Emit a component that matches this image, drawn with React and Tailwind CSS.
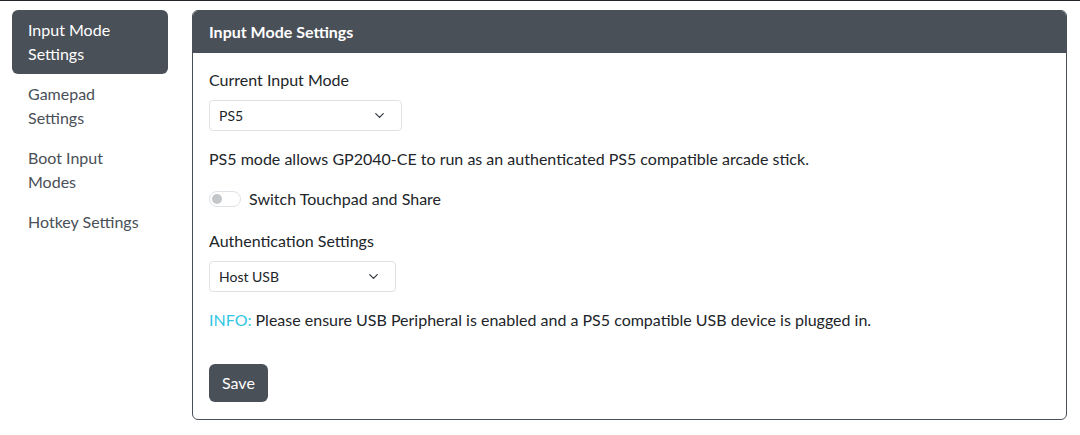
import { ChevronDown } from "lucide-react";

const navItems = [
  { label: "Input Mode Settings", active: true },
  { label: "Gamepad Settings" },
  { label: "Boot Input Modes" },
  { label: "Hotkey Settings" },
];

function Select({ value, width }) {
  return (
    <div
      className={`flex items-center justify-between h-[31px] rounded-[4px] border border-[#dee2e6] bg-white pl-[9px] pr-[14px] text-[14px] text-[#212529] ${width}`}
    >
      <span>{value}</span>
      <ChevronDown size={15} strokeWidth={2} className="text-[#343a40]" />
    </div>
  );
}

export default function App() {
  return (
    <div className="min-h-[435px] bg-white border-t border-[#212529] font-['Lato',sans-serif] text-[16px] text-[#212529]">
      <div className="flex gap-6 px-3 pt-[9px]">
        <nav className="flex w-[156px] shrink-0 flex-col">
          {navItems.map((item) => (
            <a
              key={item.label}
              className={
                item.active
                  ? "rounded-[6px] bg-[#4a5058] px-4 py-2 leading-6 text-white"
                  : "px-4 py-2 leading-6 text-[#495057]"
              }
            >
              {item.label}
            </a>
          ))}
        </nav>

        <div className="flex-1 overflow-hidden rounded-[6px] border border-[#4a5058] mr-[1px]">
          <div className="h-[42px] bg-[#4a5058] px-4 flex items-center font-bold text-white">
            Input Mode Settings
          </div>
          <div className="flex flex-col px-4 pt-[15px] pb-[17px]">
            <label className="leading-6 mb-2">Current Input Mode</label>
            <Select value="PS5" width="w-[193px]" />
            <p className="mt-4 leading-6">
              PS5 mode allows GP2040-CE to run as an authenticated PS5 compatible arcade stick.
            </p>
            <div className="mt-4 flex items-center gap-2 leading-6">
              <span className="relative h-4 w-8 rounded-full border border-[#dee2e6] bg-white">
                <span className="absolute left-[2px] top-[2px] h-[10px] w-[10px] rounded-full bg-[#c4c7ca]" />
              </span>
              <span>Switch Touchpad and Share</span>
            </div>
            <label className="mt-[18px] leading-6 mb-2">Authentication Settings</label>
            <Select value="Host USB" width="w-[187px]" />
            <p className="mt-4 leading-6">
              <span className="text-[#31c6e4]">INFO:</span> Please ensure USB Peripheral is enabled and a PS5 compatible USB device is plugged in.
            </p>
            <div className="mt-[32px]">
              <button className="h-[38px] rounded-[6px] bg-[#4a5058] px-[13px] text-white">Save</button>
            </div>
          </div>
        </div>
      </div>
    </div>
  );
}
